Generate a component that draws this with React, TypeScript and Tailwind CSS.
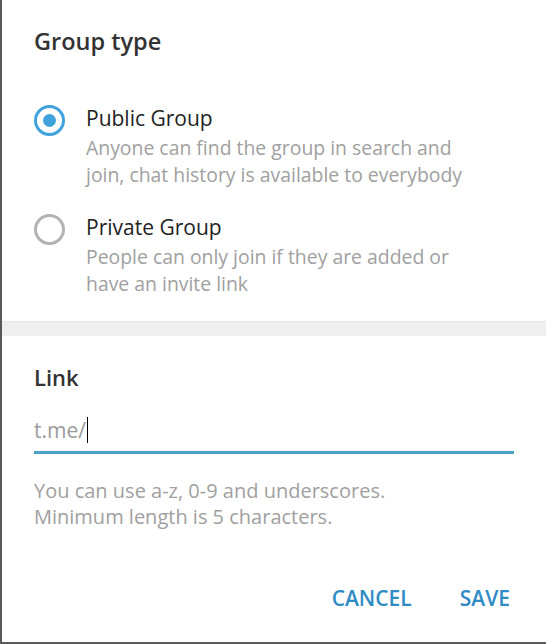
import { useState } from "react";

type Option = {
  id: "public" | "private";
  title: string;
  lines: string[];
};

const options: Option[] = [
  {
    id: "public",
    title: "Public Group",
    lines: ["Anyone can find the group in search and", "join, chat history is available to everybody"],
  },
  {
    id: "private",
    title: "Private Group",
    lines: ["People can only join if they are added or", "have an invite link"],
  },
];

function Radio({ checked }: { checked: boolean }) {
  return (
    <span
      className={
        checked
          ? "flex h-[31px] w-[31px] shrink-0 items-center justify-center rounded-full border-[3px] border-[#40a2dc]"
          : "flex h-[31px] w-[31px] shrink-0 items-center justify-center rounded-full border-[3px] border-[#b3b3b3]"
      }
    >
      {checked && <span className="h-[13px] w-[13px] rounded-full bg-[#40a2dc]" />}
    </span>
  );
}

export default function App() {
  const [type, setType] = useState<Option["id"]>("public");

  return (
    <div
      className="flex h-[644px] w-[546px] flex-col border-b-2 border-l-2 border-[#5a5a5a] bg-white text-[#222]"
      style={{ fontFamily: '"Open Sans", "Noto Sans", sans-serif' }}
    >
      <div className="px-[32px] pt-[26px]">
        <h2 className="text-[23.5px] font-semibold leading-[30px] text-[#333]">Group type</h2>

        <div className="mt-[49px] flex flex-col gap-[26px]">
          {options.map((o) => (
            <button
              key={o.id}
              type="button"
              onClick={() => setType(o.id)}
              className="flex items-start gap-[21px] text-left"
            >
              <Radio checked={type === o.id} />
              <span className="-mt-[1px] flex flex-col whitespace-nowrap">
                <span className="text-[21px] leading-[28px] text-[#222]">{o.title}</span>
                <span className="mt-[2px] text-[19.4px] leading-[27px] text-[#a0a0a0]">
                  {o.lines.map((l) => (
                    <span key={l} className="block">
                      {l}
                    </span>
                  ))}
                </span>
              </span>
            </button>
          ))}
        </div>
      </div>

      <div className="mt-[24px] h-[15px] border-t border-[#e4e4e4] bg-[#efefef]" />

      <div className="px-[32px] pt-[27px]">
        <h3 className="text-[22px] font-semibold leading-[28px] text-[#333]">Link</h3>
        <div className="mt-[25px] flex items-center border-b-[3px] border-[#4aa0c6] pb-[7px]">
          <span className="text-[21px] leading-[28px] text-[#9a9a9a]">t.me/</span>
          <span className="ml-[1px] h-[26px] w-px bg-black" />
        </div>
        <p className="mt-[24px] whitespace-nowrap text-[20px] leading-[26px] text-[#a0a0a0]">
          You can use a-z, 0-9 and underscores.
          <br />
          Minimum length is 5 characters.
        </p>
      </div>

      <div className="mt-auto flex justify-end gap-[48px] px-[36px] pb-[30px]">
        <button type="button" className="text-[21px] font-semibold leading-[28px] text-[#2f8bc4]">
          CANCEL
        </button>
        <button type="button" className="text-[21px] font-semibold leading-[28px] text-[#2f8bc4]">
          SAVE
        </button>
      </div>
    </div>
  );
}
